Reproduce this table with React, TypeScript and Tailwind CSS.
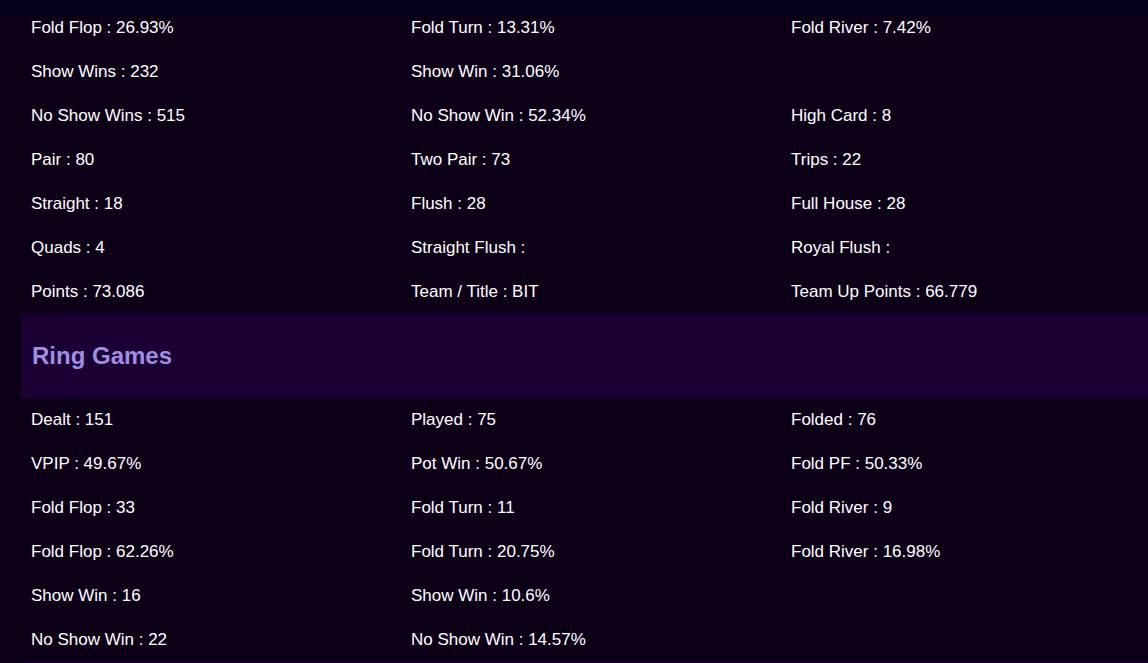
const tourneyStats: string[] = [
  "Fold Flop : 26.93%", "Fold Turn : 13.31%", "Fold River : 7.42%",
  "Show Wins : 232", "Show Win : 31.06%", "",
  "No Show Wins : 515", "No Show Win : 52.34%", "High Card : 8",
  "Pair : 80", "Two Pair : 73", "Trips : 22",
  "Straight : 18", "Flush : 28", "Full House : 28",
  "Quads : 4", "Straight Flush :", "Royal Flush :",
  "Points : 73.086", "Team / Title : BIT", "Team Up Points : 66.779",
];

const ringStats: string[] = [
  "Dealt : 151", "Played : 75", "Folded : 76",
  "VPIP : 49.67%", "Pot Win : 50.67%", "Fold PF : 50.33%",
  "Fold Flop : 33", "Fold Turn : 11", "Fold River : 9",
  "Fold Flop : 62.26%", "Fold Turn : 20.75%", "Fold River : 16.98%",
  "Show Win : 16", "Show Win : 10.6%", "",
  "No Show Win : 22", "No Show Win : 14.57%", "",
];

function StatGrid({ items }: { items: string[] }) {
  return (
    <div className="grid grid-cols-[380px_380px_380px] px-[10px]">
      {items.map((s, i) => (
        <div key={i} className="h-[44px] flex items-center text-[17px] text-white whitespace-nowrap">
          {s}
        </div>
      ))}
    </div>
  );
}

function SectionHeader({ title }: { title?: string }) {
  return (
    <div className="h-[84px] bg-[#1b0033] flex items-center px-[11px]">
      {title && <h2 className="text-[24px] font-bold text-[#9d8fe3]">{title}</h2>}
    </div>
  );
}

export default function App() {
  return (
    <div className="w-[1148px] h-[663px] overflow-hidden bg-[#0c0017] font-['Liberation_Sans',Arial,sans-serif]">
      <div className="relative z-10 h-[14px] bg-[#03001a]" />
      <div className="ml-[21px] -mt-[8px]">
        <StatGrid items={tourneyStats} />
        <SectionHeader title="Ring Games" />
        <StatGrid items={ringStats} />
        <SectionHeader />
      </div>
    </div>
  );
}
